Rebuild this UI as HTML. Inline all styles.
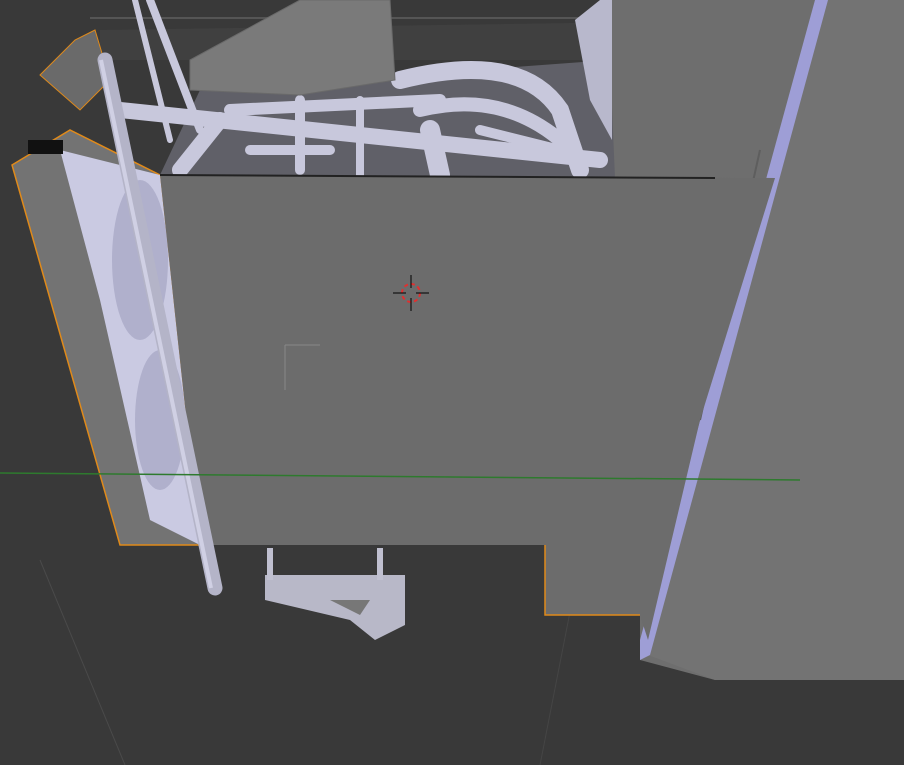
<!DOCTYPE html>
<html><head><meta charset="utf-8"><style>
html,body{margin:0;padding:0;background:#393939;overflow:hidden}
svg{display:block}
</style></head><body>
<svg width="904" height="765" viewBox="0 0 904 765" xmlns="http://www.w3.org/2000/svg">
<rect width="904" height="765" fill="#393939"/>
<line x1="40" y1="560" x2="125" y2="765" stroke="#4a4a4a" stroke-width="1"/>
<line x1="690" y1="0" x2="540" y2="765" stroke="#454545" stroke-width="1"/>
<line x1="90" y1="18" x2="640" y2="18" stroke="#555" stroke-width="2"/>
<polygon points="100,30 640,22 640,60 100,60" fill="#404040"/>
<!-- right mass -->
<polygon points="610,0 904,0 904,680 715,680 640,660 640,615 600,615 600,178 610,178" fill="#6e6e6e"/>
<polygon points="825,0 904,0 904,680 715,680 648,655" fill="#737373"/>
<polygon points="815,0 828,0 650,655 640,660 640,640" fill="#9e9ed6"/>
<line x1="760" y1="150" x2="700" y2="420" stroke="#5e5e5e" stroke-width="2"/>
<!-- top mechanical clutter -->
<polygon points="200,90 610,60 615,178 160,175" fill="#606068"/>
<g stroke="#c8c8dc" stroke-linecap="round" fill="none">
<path d="M120,110 L600,160" stroke-width="16"/>
<path d="M400,80 Q520,50 560,110 L580,170" stroke-width="18"/>
<path d="M420,110 Q500,90 560,140" stroke-width="14"/>
<path d="M230,110 L440,100" stroke-width="12"/>
<path d="M150,0 L200,130" stroke-width="8"/>
<path d="M135,0 L170,140" stroke-width="6"/>
<path d="M300,100 L300,170" stroke-width="10"/>
<path d="M360,100 L360,175" stroke-width="8"/>
<path d="M430,130 L440,175" stroke-width="20"/>
<path d="M220,120 L180,170" stroke-width="16"/>
<path d="M250,150 L330,150" stroke-width="10"/>
<path d="M480,130 L560,150" stroke-width="10"/>
</g>
<polygon points="190,60 300,0 390,0 395,80 300,95 190,90" fill="#7a7a7a" stroke="#6a6a6a"/>
<polygon points="575,20 600,0 612,0 612,140 590,100" fill="#b8b8cc"/>
<polygon points="40,75 75,40 95,30 110,80 80,110" fill="#6a6a6a" stroke="#e08a1a" stroke-width="1"/>
<!-- left radiator -->
<polygon points="12,165 70,130 160,175 200,545 120,545" fill="#737373" stroke="#e08a1a" stroke-width="1.5"/>
<polygon points="60,150 160,175 200,545 150,520 100,300" fill="#cacae2"/>
<ellipse cx="140" cy="260" rx="28" ry="80" fill="#b0b0cc"/>
<ellipse cx="160" cy="420" rx="25" ry="70" fill="#b0b0cc"/>
<rect x="28" y="140" width="35" height="14" fill="#111"/>
<!-- main panel -->
<polygon points="160,175 775,178 700,420 648,640 640,615 545,615 545,545 200,545" fill="#6c6c6c"/>
<line x1="160" y1="175" x2="715" y2="178" stroke="#222" stroke-width="2"/>
<polyline points="545,545 545,615 640,615" stroke="#e08a1a" stroke-width="1.5" fill="none"/>
<path d="M285,345 L320,345 M285,345 L285,390" stroke="#888" stroke-width="1"/>
<!-- long rod -->
<line x1="105" y1="60" x2="215" y2="588" stroke="#b4b4c8" stroke-width="15" stroke-linecap="round"/>
<line x1="101" y1="60" x2="211" y2="588" stroke="#d0d0e4" stroke-width="4"/>
<!-- bottom hanging part -->
<polygon points="265,575 405,575 405,625 375,640 350,620 265,600" fill="#b8b8c8"/>
<polygon points="330,600 370,600 360,615" fill="#777"/>
<line x1="270" y1="548" x2="270" y2="580" stroke="#c0c0d0" stroke-width="6"/>
<line x1="380" y1="548" x2="380" y2="580" stroke="#c0c0d0" stroke-width="6"/>
<!-- green axis -->
<line x1="0" y1="473" x2="800" y2="480" stroke="#2e7a2e" stroke-width="1.5"/>
<!-- 3d cursor -->
<circle cx="411" cy="293" r="9" fill="none" stroke="#e03030" stroke-width="2" stroke-dasharray="4 3"/>
<line x1="411" y1="275" x2="411" y2="288" stroke="#000"/>
<line x1="411" y1="298" x2="411" y2="311" stroke="#000"/>
<line x1="393" y1="293" x2="406" y2="293" stroke="#000"/>
<line x1="416" y1="293" x2="429" y2="293" stroke="#000"/>
</svg>
</body></html>
